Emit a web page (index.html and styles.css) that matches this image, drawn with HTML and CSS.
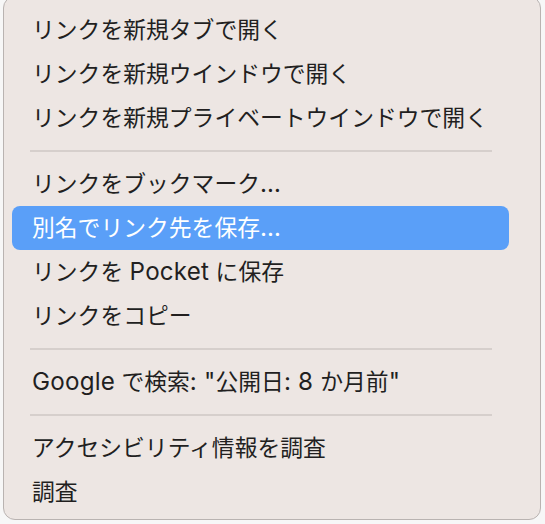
FILE: index.html
```html
<!DOCTYPE html>
<html lang="ja">
<head>
<meta charset="utf-8">
<link rel="stylesheet" href="styles.css">
</head>
<body>
<div class="menu">
  <div class="item">リンクを新規タブで開く</div>
  <div class="item">リンクを新規ウインドウで開く</div>
  <div class="item">リンクを新規プライベートウインドウで開く</div>
  <div class="sep"></div>
  <div class="item">リンクをブックマーク<span class="lat">…</span></div>
  <div class="item active">別名でリンク先を保存<span class="lat">…</span></div>
  <div class="item">リンクを <span class="lat">Pocket</span> に保存</div>
  <div class="item">リンクをコピー</div>
  <div class="sep"></div>
  <div class="item"><span class="lat">Google</span> で検索<span class="lat">: "</span>公開日<span class="lat">: 8 </span>か月前<span class="lat">"</span></div>
  <div class="sep"></div>
  <div class="item">アクセシビリティ情報を調査</div>
  <div class="item">調査</div>
</div>
</body>
</html>
```
FILE: styles.css
```css
html, body {
  margin: 0;
  padding: 0;
  background: #f7f7f7;
  overflow: hidden;
}
body {
  width: 545px;
  height: 524px;
}
.menu {
  box-sizing: border-box;
  width: 538px;
  margin: -4px 0 0 3px;
  padding: 11px 0 5px 0;
  background: #ede6e3;
  border: 1px solid #b9b3b1;
  border-radius: 12px;
  font-family: "Inter", "Noto Sans CJK JP", sans-serif;
  font-size: 22.8px;
  color: #221f1f;
  display: flex;
  flex-direction: column;
}
.item {
  height: 44px;
  line-height: 44px;
  margin: 0 31px 0 8px;
  padding-left: 20px;
  border-radius: 8px;
  white-space: nowrap;
}
.lat {
  font-size: 24.2px;
  letter-spacing: 0.2px;
}
.item.active {
  background: #5a9ff8;
  color: #ffffff;
}
.sep {
  height: 2px;
  margin: 10px 48px 10px 26px;
  background: #d6cfcc;
}
```
